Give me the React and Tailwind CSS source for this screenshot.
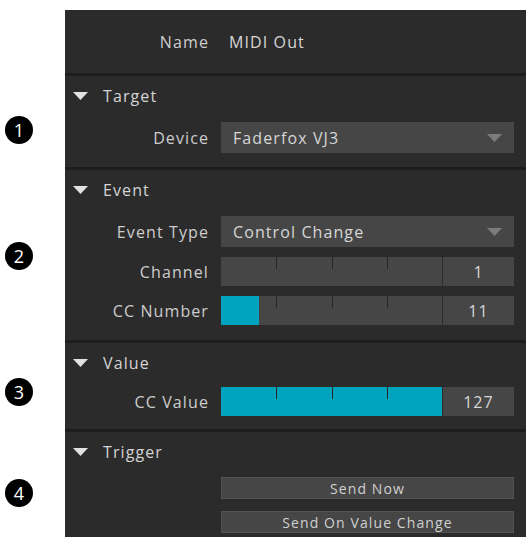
import React from "react";

const font = { fontFamily: '"Open Sans", "Liberation Sans", sans-serif' };

// markers beside the inspector, one per section
const markers = [
  { n: 1, mt: "mt-[116px]" },
  { n: 2, mt: "mt-[98px]" },
  { n: 3, mt: "mt-[108px]" },
  { n: 4, mt: "mt-[73px]" },
];

function Caret({ className }) {
  return (
    <svg width="15" height="8" viewBox="0 0 15 8" className={className}>
      <polygon points="0,0 15,0 7.5,8" fill="currentColor" />
    </svg>
  );
}

function Label({ children }) {
  return (
    <div className="w-[144px] shrink-0 text-right text-[#cdcdcd]">{children}</div>
  );
}

function Row({ label, children }) {
  return (
    <div className="flex items-center gap-3 pr-3">
      <Label>{label}</Label>
      <div className="flex-1">{children}</div>
    </div>
  );
}

function Dropdown({ value }) {
  return (
    <div className="flex h-[31px] items-center justify-between bg-[#464646] pl-3 pr-3 text-[#d6d6d6]">
      <span>{value}</span>
      <Caret className="text-[#7c7c7c]" />
    </div>
  );
}

function Slider({ value, fill }) {
  return (
    <div className="flex h-[29px] gap-px">
      <div className="relative flex-1 bg-[#464646]">
        <div className="absolute inset-y-0 left-0 bg-[#00a4bc]" style={{ width: `${fill * 100}%` }} />
        <div className="absolute left-1/4 top-0 h-3 w-px bg-[#262626]" />
        <div className="absolute left-1/2 top-0 h-3 w-px bg-[#262626]" />
        <div className="absolute left-3/4 top-0 h-3 w-px bg-[#262626]" />
      </div>
      <div className="flex w-[71px] items-center justify-center bg-[#464646] text-[#d6d6d6]">
        {value}
      </div>
    </div>
  );
}

function Section({ title, children, className = "", bodyClass = "mt-[6px]" }) {
  return (
    <section className={`border-t-[3px] border-[#1d1d1d] ${className}`}>
      <div className="flex h-[40px] items-center gap-[15px] pl-2 text-[#d4d4d4]">
        <Caret className="text-[#e2e2e2]" />
        <span>{title}</span>
      </div>
      <div className={`${bodyClass} flex flex-col gap-[10px]`}>{children}</div>
    </section>
  );
}

function Button({ children }) {
  return (
    <button className="h-[22px] w-full border border-[#515151] bg-[#464646] text-[14px] text-[#d0d0d0]">
      {children}
    </button>
  );
}

export default function App() {
  return (
    <div
      className="flex h-[537px] w-[526px] overflow-hidden bg-white text-[16px] tracking-[1.1px]"
      style={font}
    >
      <div className="flex w-[65px] shrink-0 flex-col items-start pl-[5px]">
        {markers.map((m) => (
          <div
            key={m.n}
            className={`${m.mt} flex h-[28px] w-[28px] items-center justify-center rounded-full bg-black text-[18px] tracking-normal text-white`}
          >
            {m.n}
          </div>
        ))}
      </div>

      <div className="mt-[10px] flex flex-1 flex-col bg-[#2b2b2b]">
        <div className="flex h-[63px] items-center gap-3 pr-3">
          <Label>Name</Label>
          <span className="pl-2 text-[#d6d6d6]">MIDI Out</span>
        </div>

        <Section title="Target" className="h-[94px]">
          <Row label="Device">
            <Dropdown value="Faderfox VJ3" />
          </Row>
        </Section>

        <Section title="Event" className="h-[173px]">
          <Row label="Event Type">
            <Dropdown value="Control Change" />
          </Row>
          <Row label="Channel">
            <Slider value="1" fill={0} />
          </Row>
          <Row label="CC Number">
            <Slider value="11" fill={0.172} />
          </Row>
        </Section>

        <Section title="Value" className="h-[89px]" bodyClass="mt-[4px]">
          <Row label="CC Value">
            <Slider value="127" fill={1} />
          </Row>
        </Section>

        <Section title="Trigger" className="flex-1" bodyClass="mt-[5px]">
          <div className="flex flex-col gap-3 pl-[156px] pr-3">
            <Button>Send Now</Button>
            <Button>Send On Value Change</Button>
          </div>
        </Section>
      </div>
    </div>
  );
}
